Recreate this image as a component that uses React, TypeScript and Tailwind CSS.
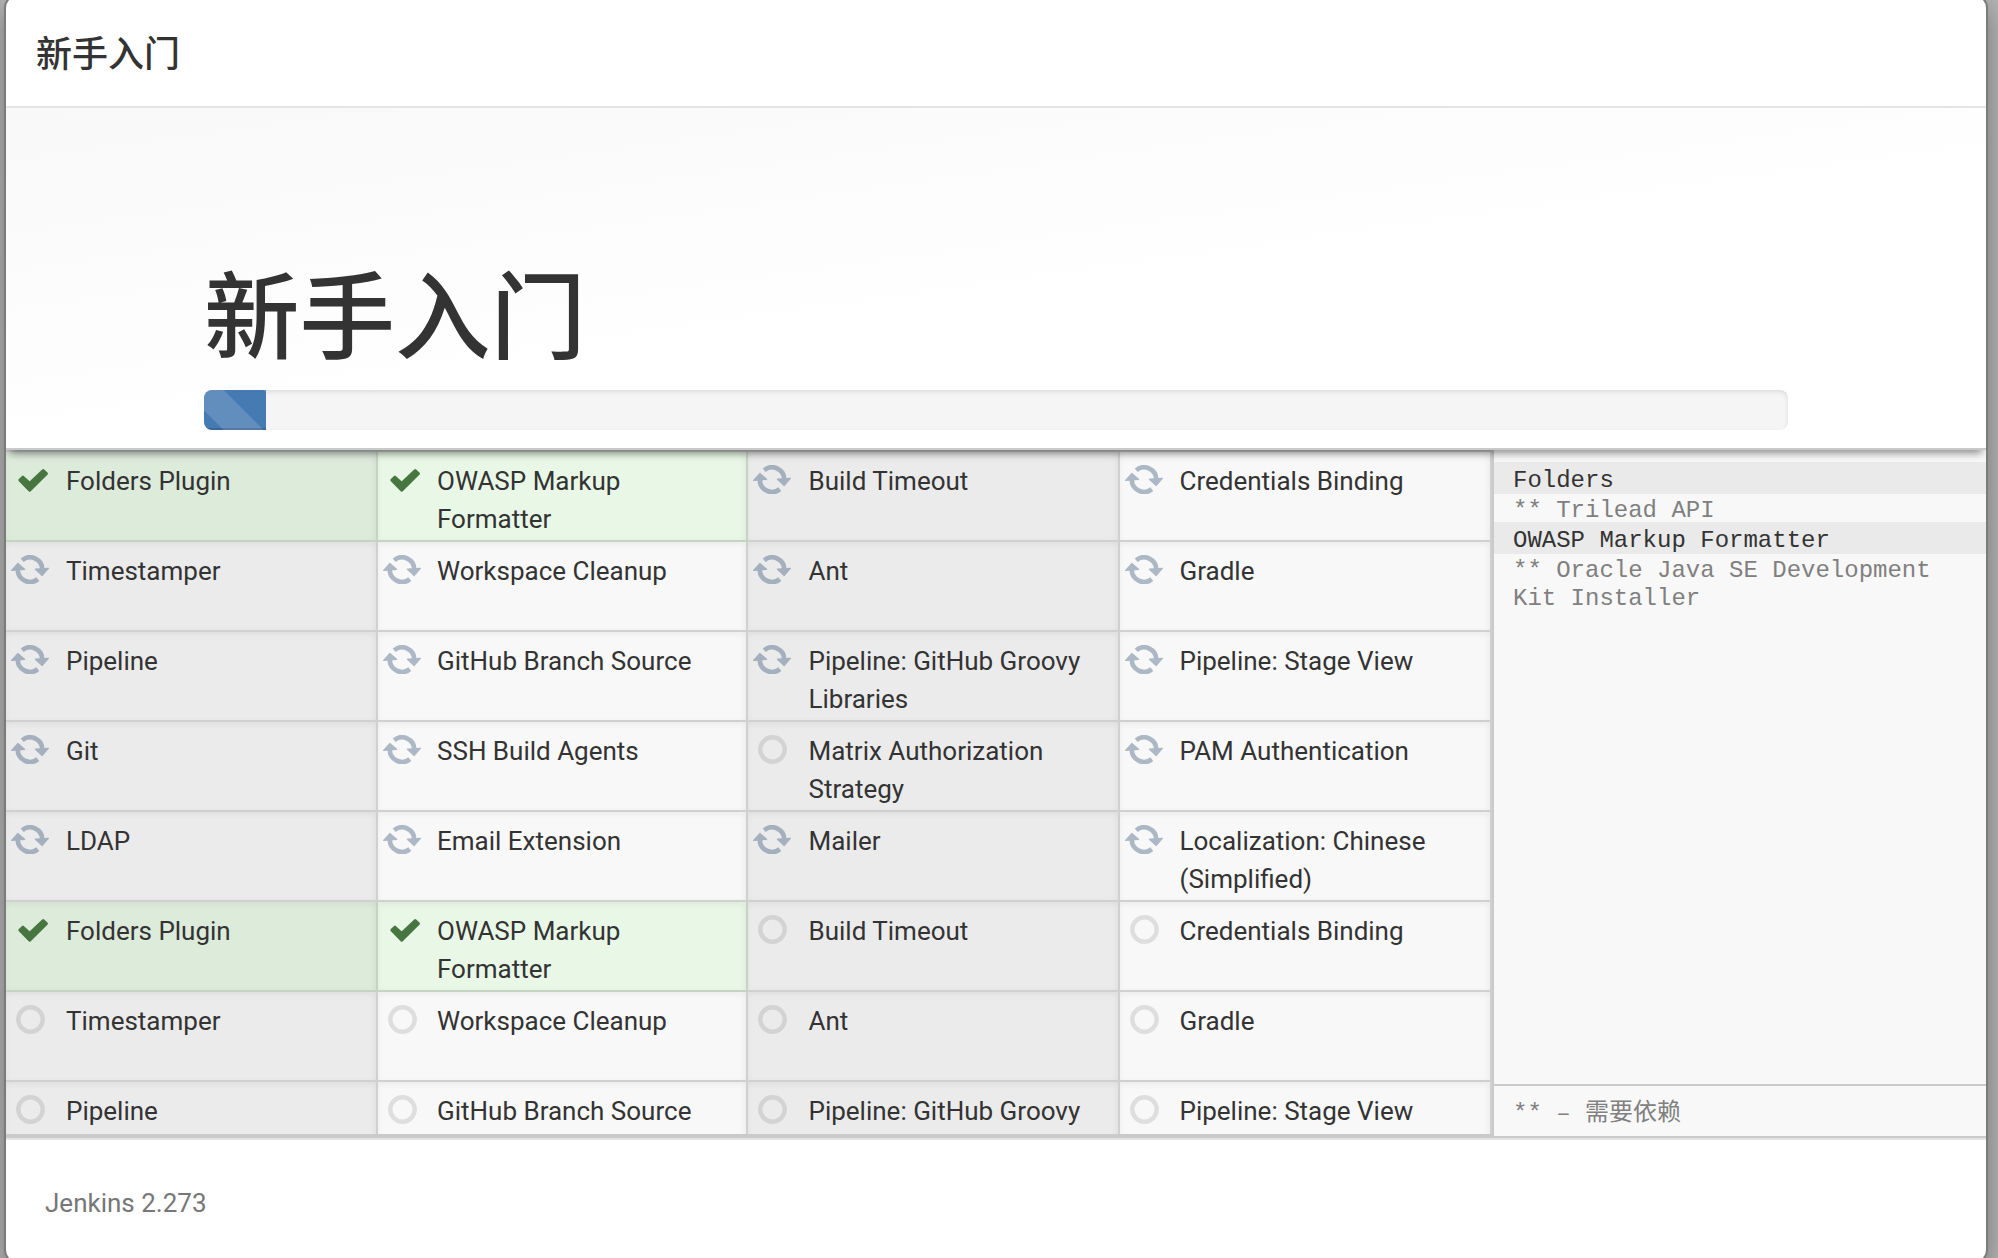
import React from "react";

type Status = "done" | "busy" | "idle";

const items: [string, Status][] = [
  ["Folders Plugin", "done"],
  ["OWASP Markup Formatter", "done"],
  ["Build Timeout", "busy"],
  ["Credentials Binding", "busy"],
  ["Timestamper", "busy"],
  ["Workspace Cleanup", "busy"],
  ["Ant", "busy"],
  ["Gradle", "busy"],
  ["Pipeline", "busy"],
  ["GitHub Branch Source", "busy"],
  ["Pipeline: GitHub Groovy Libraries", "busy"],
  ["Pipeline: Stage View", "busy"],
  ["Git", "busy"],
  ["SSH Build Agents", "busy"],
  ["Matrix Authorization Strategy", "idle"],
  ["PAM Authentication", "busy"],
  ["LDAP", "busy"],
  ["Email Extension", "busy"],
  ["Mailer", "busy"],
  ["Localization: Chinese (Simplified)", "busy"],
  ["Folders Plugin", "done"],
  ["OWASP Markup Formatter", "done"],
  ["Build Timeout", "idle"],
  ["Credentials Binding", "idle"],
  ["Timestamper", "idle"],
  ["Workspace Cleanup", "idle"],
  ["Ant", "idle"],
  ["Gradle", "idle"],
  ["Pipeline", "idle"],
  ["GitHub Branch Source", "idle"],
  ["Pipeline: GitHub Groovy Libraries", "idle"],
  ["Pipeline: Stage View", "idle"],
];

const labelOffsets = ["w-[60px]", "w-[59px]", "w-[60.5px]", "w-[59.5px]"];

function StatusIcon({ status }: { status: Status }) {
  if (status === "done") {
    return (
      <svg className="ml-3 mt-[17px] h-[23px] w-[30px]" viewBox="0 0 30 23">
        <path
          d="M1.9 11.1 L4.8 8.2 L11.7 14.4 L25.2 1.6 L28.4 4.6 L11.7 21.1 Z"
          fill="#477641"
          stroke="#477641"
          strokeWidth="3"
          strokeLinejoin="round"
        />
      </svg>
    );
  }
  if (status === "busy") {
    return (
      <svg className="ml-[5px] mt-[13px] h-[29px] w-[38px]" viewBox="0 0 38 29" fill="none">
        <g opacity="0.38" stroke="#335375" strokeLinejoin="round">
          <path d="M11.2 5.2 A12.2 12.2 0 0 1 31.2 15" strokeWidth="4.7" />
          <path d="M26.8 24.1 A12.2 12.2 0 0 1 6.8 14.4" strokeWidth="4.7" />
          <path d="M0.7 15.4 L6.8 8.6 L13.5 14.2 Z" fill="#335375" strokeWidth="1.4" />
          <path d="M24.5 14.2 L31.2 20.4 L37.3 13.4 Z" fill="#335375" strokeWidth="1.4" />
        </g>
      </svg>
    );
  }
  return (
    <svg className="ml-[10px] mt-[13px] size-[29px]" viewBox="0 0 29 29" fill="none">
      <circle cx="14.5" cy="14.5" r="12.2" stroke="#000" strokeOpacity="0.1" strokeWidth="4.4" />
    </svg>
  );
}

function PluginCell({ name, status, index }: { name: string; status: Status; index: number }) {
  const odd = index % 2 === 0;
  const background =
    status === "done" ? (odd ? "bg-[#ddebdb]" : "bg-[#e9f8e6]") : odd ? "bg-[#ebebeb]" : "bg-[#f8f8f8]";
  const border = status === "done" ? "border-[#c5d3c3]" : "border-[#d0d0d0]";
  return (
    <div
      className={`flex h-[90px] border-r-2 border-b-2 shadow-[inset_-1px_2px_6px_rgba(0,0,0,0.06)] ${background} ${border}`}
    >
      <div className={`shrink-0 ${labelOffsets[index % 4]}`}>
        <StatusIcon status={status} />
      </div>
      <div className="pt-[10px] pr-4 text-[26px] leading-[38px]">{name}</div>
    </div>
  );
}

export default function App() {
  return (
    <div className="h-[1258px] w-[1998px] overflow-hidden bg-[#b4b4b4] pl-[6px] font-[Roboto,'Noto_Sans_CJK_SC',sans-serif] text-[#333]">
      <div className="-mt-1 flex h-[1266px] w-[1980px] flex-col overflow-hidden rounded-xl bg-white shadow-[0_0_0_2px_#7b7b7b,0_10px_30px_rgba(0,0,0,0.4)]">
        <header className="flex h-28 shrink-0 items-center border-b-2 border-[#e4e4e4] pt-[7px] pl-[30px] text-[36px] font-medium">
          <h4>新手入门</h4>
        </header>
        <section className="relative z-10 flex h-[342px] shrink-0 flex-col border-b-2 border-[#cacaca] bg-linear-[172deg,#f8f8f8_0%,#ffffff_56%] px-[198px] pt-[136px] shadow-[0_7px_8px_-4px_rgba(0,0,0,0.45)]">
          <h1 className="h-[146px] pt-1 text-[95.5px] leading-[142px] font-medium">新手入门</h1>
          <div className="h-10 w-[1584px] shrink-0 overflow-hidden rounded-lg bg-[#f5f5f5] shadow-[inset_0_2px_4px_rgba(0,0,0,0.1)]">
            <div className="h-full w-[62px] bg-[#467ab3] bg-[linear-gradient(45deg,rgba(255,255,255,.15)_25%,transparent_25%,transparent_50%,rgba(255,255,255,.15)_50%,rgba(255,255,255,.15)_75%,transparent_75%,transparent)] bg-size-[80px_80px] bg-position-[-20px_0px] shadow-[inset_0_-2px_0_rgba(0,0,0,0.15)]" />
          </div>
        </section>
        <main className="flex h-[690px] shrink-0 border-b-2 border-[#e4e4e4]">
          <div className="h-[688px] w-[1488px] shrink-0 overflow-hidden border-t-2 border-r-2 border-b-4 border-[#cacaca]">
            <div className="grid grid-cols-[372px_370px_372px_372px]">
              {items.map(([name, status], i) => (
                <PluginCell key={i} name={name} status={status} index={i} />
              ))}
            </div>
          </div>
          <div className="flex h-[688px] flex-1 flex-col border-b-2 border-[#cacaca] bg-[#f8f8f8] font-['Liberation_Mono','Noto_Sans_CJK_SC',monospace] text-[24px] leading-[28px] text-[#808080]">
            <div className="flex-1 pt-3">
              <div className="h-8 bg-[#eaeaea] pl-[19px] leading-[37px] text-[#333]">Folders</div>
              <div className="h-7 pl-[19px] leading-[34px]">** Trilead API</div>
              <div className="h-8 bg-[#eaeaea] pl-[19px] leading-[37px] text-[#333]">OWASP Markup Formatter</div>
              <div className="pt-[3px] pr-4 pl-[19px]">** Oracle Java SE Development Kit Installer</div>
            </div>
            <div className="h-[52px] border-t-2 border-[#cacaca] pt-[2px] pl-[19px] leading-[52px]">** – 需要依赖</div>
          </div>
        </main>
        <footer className="pt-[44px] pl-[39px] text-[26px] leading-[38px] text-[#777]">Jenkins 2.273</footer>
      </div>
    </div>
  );
}
